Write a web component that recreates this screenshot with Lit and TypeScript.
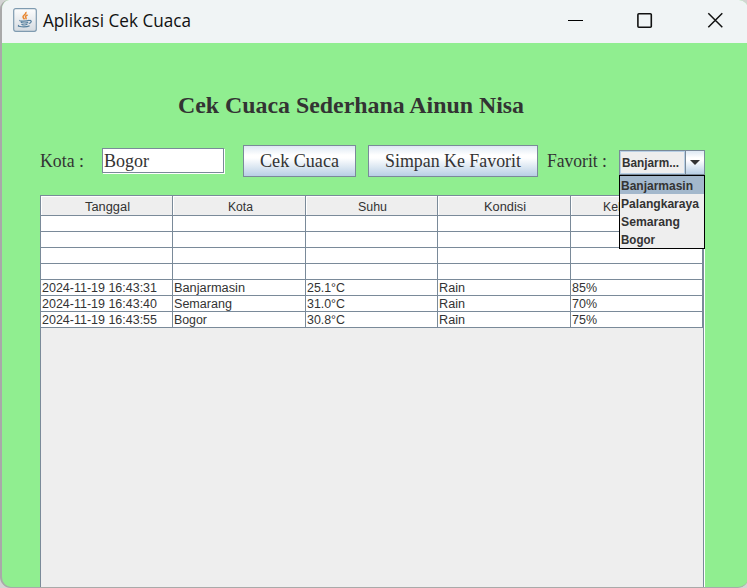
import { LitElement, html, css, svg } from "lit";
import { customElement, property } from "lit/decorators.js";
import { classMap } from "lit/directives/class-map.js";

const line = (x: number, y: number, w: number, text: string, cls: string) =>
  svg`<text class=${cls} x=${x} y=${y} textLength=${w} lengthAdjust="spacingAndGlyphs">${text}</text>`;

@customElement("fit-text")
class FitText extends LitElement {
  @property() text = "";
  @property({ type: Number }) width = 0;
  @property({ type: Number }) base = 16;
  static styles = css`
    :host { display: block; line-height: 0; flex: none; }
    svg { display: block; overflow: visible; }
    .run { fill: currentColor; white-space: pre; }
  `;
  render() {
    return html`<svg width=${this.width} height=${this.base}>${line(0, this.base, this.width, this.text, "run")}</svg>`;
  }
}

@customElement("title-bar")
class TitleBar extends LitElement {
  static styles = css`
    :host { display: flex; height: 43px; flex: none; background: #f0f4f5; color: #111; font: 18px "Open Sans", "Noto Sans", sans-serif; }
    .icon { margin: 8px 0 0 11px; flex: none; }
    .name { margin: 11px 0 0 6px; }
    .controls { margin-left: auto; display: flex; padding: 12px 25px 0 0; gap: 54px; }
    svg { display: block; }
  `;
  render() {
    return html`
      <svg class="icon" width="24" height="24" viewBox="0 0 24 24" fill="none">
        <defs><linearGradient id="g" x2="0" y2="1"><stop stop-color="#fdfdfd" /><stop offset="1" stop-color="#d5dbe1" /></linearGradient></defs>
        <rect x=".7" y=".7" width="22.6" height="22.6" rx="2" fill="url(#g)" stroke="#7f9bb0" stroke-width="1.2" />
        <path d="M12.7 4c1.5 2.1-3.7 3.2-2.6 5.3.3.8 1 1.3 1.4 2M14.6 7c-2.4 1-2.6 1.8-1.6 2.8.4.6.1 1-.4 1.5" stroke="#e8852d" stroke-width="1.5" />
        <path d="M7 12.4c-1.5.8 6.5 1.2 9.2-.1M7.8 14.3c1.5.9 5.5.9 7.4.1M8.4 16.2c1.5.8 4.5.8 6 .1M16.3 12.5c3-.6 2.3 2.4-.5 3M6.2 17.4c-4 1.4 7.3 2.1 10.4.3" stroke="#557f9e" stroke-width="1.2" />
      </svg>
      <fit-text class="name" width="148" base="16" text="Aplikasi Cek Cuaca"></fit-text>
      <div class="controls">
        <svg width="15" height="16"><path d="M0 8.5h15" stroke="#000" /></svg>
        <svg width="16" height="16"><rect x=".9" y="1.8" width="13.4" height="13.4" rx="1" fill="none" stroke="#111" stroke-width="1.6" /></svg>
        <svg width="16" height="16"><path d="M1.3 1.3l14 14M15.3 1.3l-14 14" stroke="#111" stroke-width="1.5" /></svg>
      </div>`;
  }
}

type Cell = [string, number];
const columns: Cell[] = [["Tanggal", 45], ["Kota", 25], ["Suhu", 29], ["Kondisi", 42], ["Kelembapan", 69]];
const rows: Cell[][] = [
  [], [], [], [],
  [["2024-11-19 16:43:31", 115], ["Banjarmasin", 71], ["25.1°C", 38], ["Rain", 26], ["85%", 25]],
  [["2024-11-19 16:43:40", 115], ["Semarang", 58], ["31.0°C", 38], ["Rain", 26], ["70%", 25]],
  [["2024-11-19 16:43:55", 115], ["Bogor", 33], ["30.8°C", 38], ["Rain", 26], ["75%", 25]],
];

@customElement("weather-table")
class WeatherTable extends LitElement {
  static styles = css`
    :host { display: block; box-sizing: border-box; width: 665px; border: 1px solid #7a8a99; border-bottom: 0; border-right: 0; background: #eee; color: #333; font: 12px "Liberation Sans", Arial, sans-serif; }
    .view { height: 100%; box-sizing: border-box; width: 664px; border-right: 1px solid #fff; }
    .inner { height: 100%; box-sizing: border-box; border-right: 1px solid #7a8a99; }
    .row { display: grid; grid-template-columns: 132px 133px 132px 133px 132px; }
    .cell { box-sizing: border-box; height: 16px; background: #fff; border: solid #7a8a99; border-width: 0 1px 1px 0; padding: 1px 0 0 1px; }
    .head { height: 20px; background: #eee; box-shadow: inset 1px 1px #fff; display: flex; justify-content: center; padding: 4px 0 0 2px; }
  `;
  render() {
    return html`<div class="view"><div class="inner">
      <div class="row">${columns.map(([t, w]) => html`<div class="cell head"><fit-text width=${w} base="11" text=${t}></fit-text></div>`)}</div>
      ${rows.map((r) => html`<div class="row">${columns.map((_, i) => html`<div class="cell">${r[i] ? html`<fit-text width=${r[i][1]} base="11" text=${r[i][0]}></fit-text>` : ""}</div>`)}</div>`)}
    </div></div>`;
  }
}

const favorites: Cell[] = [["Banjarmasin", 72], ["Palangkaraya", 78], ["Semarang", 59], ["Bogor", 34]];

@customElement("favorite-box")
class FavoriteBox extends LitElement {
  static styles = css`
    :host { display: block; position: relative; width: 86px; height: 25px; color: #333; font: bold 12px "Liberation Sans", Arial, sans-serif; }
    .box { box-sizing: border-box; height: 25px; border: 1px solid #7a8a99; display: flex; background: #eee; }
    .value { box-sizing: border-box; width: 65px; border: solid #b8cfe5; border-width: 1px; padding: 4px 0 0 1px; }
    .arrow { flex: 1; border-left: 1px solid #7a8a99; background: linear-gradient(#dde8f3, #fff 30%, #fff 40%, #b8cfe5); display: flex; align-items: center; justify-content: center; }
    .menu { position: absolute; z-index: 2; top: 25px; left: 0; width: 86px; box-sizing: border-box; border: 1px solid #000; background: #eee; }
    .item { height: 18px; box-sizing: border-box; padding: 3px 0 0 1px; }
    .on { background: #a3b8cc; }
  `;
  render() {
    return html`
      <div class="box">
        <div class="value"><fit-text width="57" base="11" text="Banjarm..."></fit-text></div>
        <div class="arrow"><svg width="10" height="5"><path d="M0 0h10L5 5z" fill="#333" /></svg></div>
      </div>
      <div class="menu">${favorites.map(([t, w], i) => html`<div class=${classMap({ item: true, on: i === 0 })}><fit-text width=${w} base="11" text=${t}></fit-text></div>`)}</div>`;
  }
}

@customElement("app-root")
class AppRoot extends LitElement {
  static styles = css`
    :host { display: block; width: 747px; height: 588px; background: #d4d4d4; overflow: hidden; }
    .window { box-sizing: border-box; width: 748px; height: 588px; border: solid #a9a9a9; border-width: 0 0 1px 2px; border-radius: 9px 9px 10px 11px; background: #90ee90; overflow: hidden; display: flex; flex-direction: column; color: #333; font: 18px "Liberation Serif", "Times New Roman", serif; }
    .heading { margin: 52px 0 0 176px; font-size: 24px; font-weight: bold; }
    .form { display: flex; height: 32px; margin: 32px 0 0 38px; flex: none; }
    .label { margin-top: 4px; }
    .field { margin: 3px 0 0 18px; width: 122px; height: 25px; box-sizing: border-box; border: 1px solid #7a8a99; background: #fff; box-shadow: 1px 1px #fff; padding: 1px 0 0 1px; }
    .button { box-sizing: border-box; height: 32px; border: 1px solid #7a8a99; background: linear-gradient(#dde8f3, #fff 30%, #fff 40%, #b8cfe5); padding: 3px 0 0 16px; }
    .check { width: 113px; margin-left: 19px; }
    .save { width: 170px; margin-left: 12px; }
    .fav { margin-left: 9px; }
    .pick { margin: 5px 0 0 12px; }
    .table { flex: 1; margin: 18px 0 0 38px; }
  `;
  render() {
    return html`<div class="window">
      <title-bar></title-bar>
      <fit-text class="heading" width="346" base="18" text="Cek Cuaca Sederhana Ainun Nisa"></fit-text>
      <div class="form">
        <fit-text class="label" width="44" base="18" text="Kota :"></fit-text>
        <div class="field"><fit-text width="45" base="17" text="Bogor"></fit-text></div>
        <div class="button check"><fit-text width="79" base="18" text="Cek Cuaca"></fit-text></div>
        <div class="button save"><fit-text width="136" base="18" text="Simpan Ke Favorit"></fit-text></div>
        <fit-text class="label fav" width="60" base="18" text="Favorit :"></fit-text>
        <favorite-box class="pick"></favorite-box>
      </div>
      <weather-table class="table"></weather-table>
    </div>`;
  }
}
